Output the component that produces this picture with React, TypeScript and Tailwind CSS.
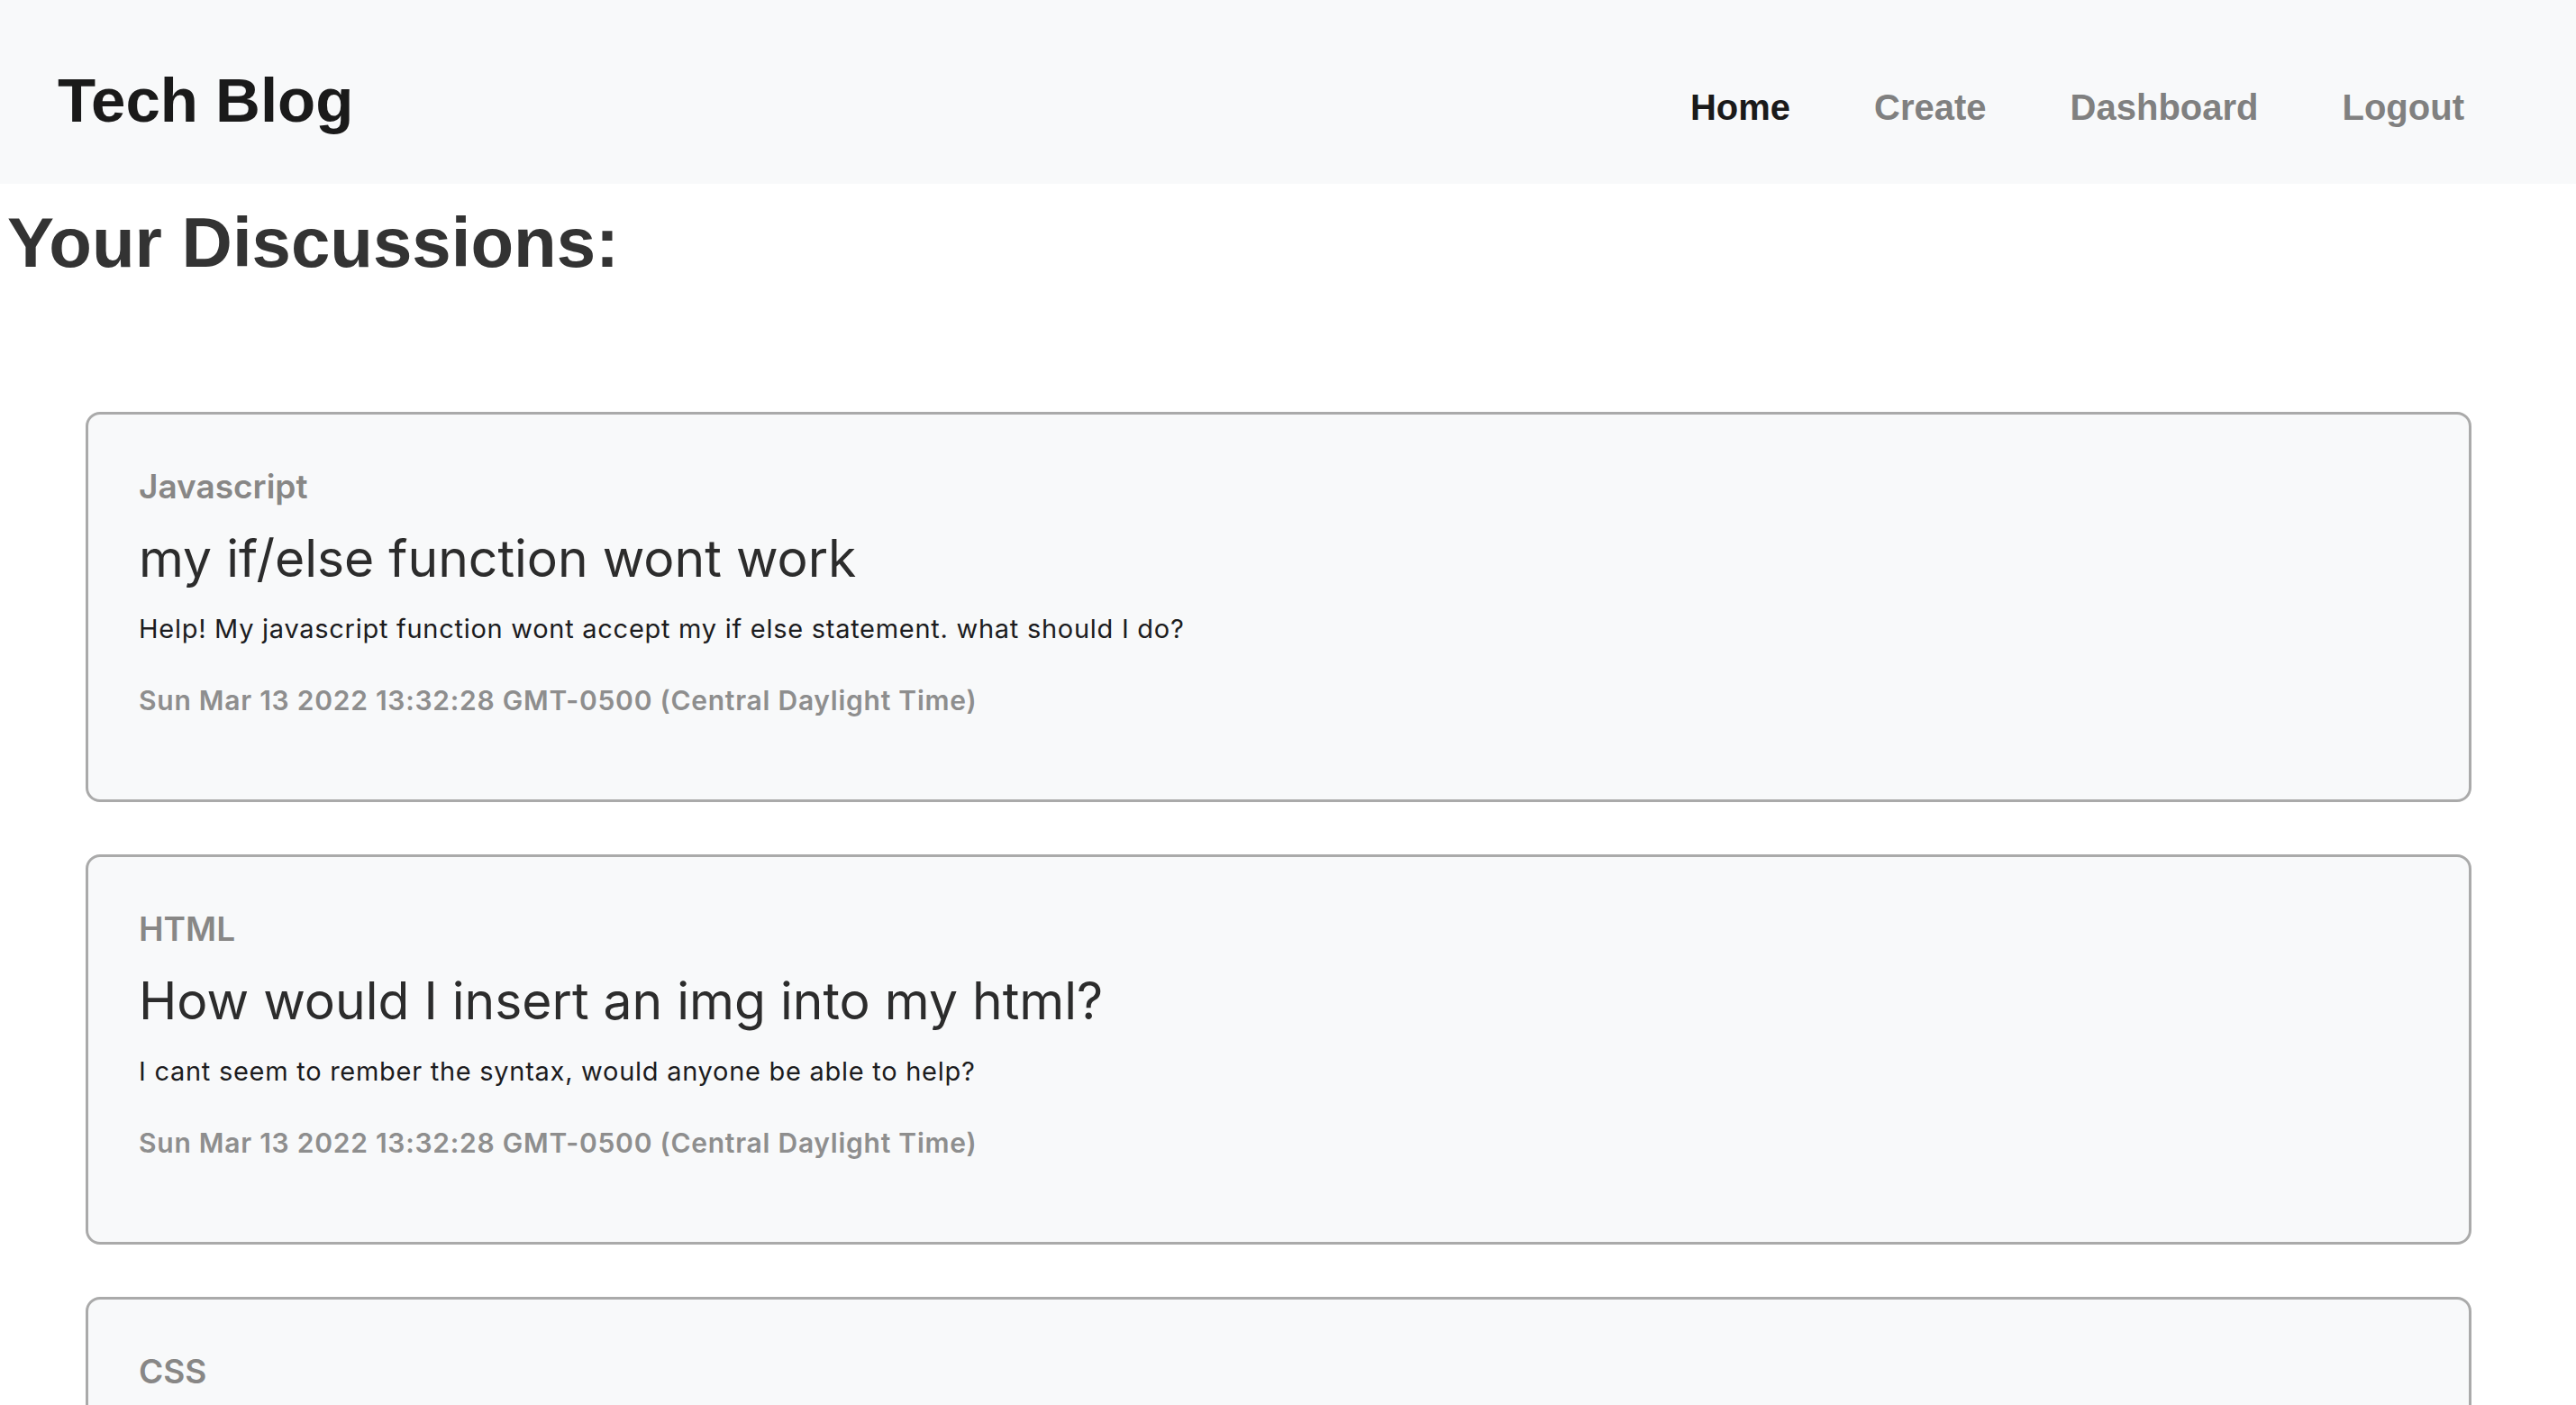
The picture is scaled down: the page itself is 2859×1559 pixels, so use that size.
import React from 'react';

const posts = [
  {
    category: 'Javascript',
    title: 'my if/else function wont work',
    body: 'Help! My javascript function wont accept my if else statement. what should I do?',
    date: 'Sun Mar 13 2022 13:32:28 GMT-0500 (Central Daylight Time)',
  },
  {
    category: 'HTML',
    title: 'How would I insert an img into my html?',
    body: 'I cant seem to rember the syntax, would anyone be able to help?',
    date: 'Sun Mar 13 2022 13:32:28 GMT-0500 (Central Daylight Time)',
  },
  {
    category: 'CSS',
    title: 'How do I center a div?',
    body: 'I have tried everything and my div still sits on the left side of the page.',
    date: 'Sun Mar 13 2022 13:32:28 GMT-0500 (Central Daylight Time)',
  },
];

const navLinks = ['Home', 'Create', 'Dashboard', 'Logout'];

const App = () => {
  return (
    <div className="min-h-screen bg-white pb-[60px]">
      {/* Navbar */}
      <header className="flex items-start justify-between h-[204px] bg-[#f8f9fa] pl-[64px] pr-[124px] font-['Liberation_Sans',Arial,sans-serif]">
        <a className="pt-[77px] text-[69px] leading-none font-bold text-[#1a1a1a]">Tech Blog</a>
        <nav className="flex gap-[93px] pt-[99px]">
          {navLinks.map((link, i) => (
            <a
              key={link}
              className={`text-[40px] leading-none font-bold ${i === 0 ? 'text-[#1a1a1a]' : 'text-[#808080]'}`}
            >
              {link}
            </a>
          ))}
        </nav>
      </header>

      <h1 className="mt-[26px] pl-[8px] text-[78px] leading-none font-bold text-[#333333] font-['Liberation_Sans',Arial,sans-serif]">
        Your Discussions:
      </h1>

      {/* Posts */}
      <div className="mt-[149px] ml-[95px] mr-[116px] flex flex-col gap-[58px] font-['Inter','Noto_Sans',sans-serif]">
        {posts.map((post, index) => (
          <div
            key={index}
            className="border-[3px] border-[#aaaaaa] rounded-[16px] bg-[#f8f9fa] px-[56px] pt-[58px] pb-[89px]"
          >
            <h6 className="text-[37px] leading-[44px] font-semibold text-[#888786]">{post.category}</h6>
            <h5 className="mt-[23px] text-[57px] leading-[70px] font-normal text-[#2c2c2c]">{post.title}</h5>
            <p className="mt-[22px] text-[29px] leading-[42px] tracking-[0.025em] text-[#1c1c1e]">{post.body}</p>
            <p className="mt-[37px] text-[30px] leading-[42px] tracking-[0.025em] font-semibold text-[#8e8e8e]">{post.date}</p>
          </div>
        ))}
      </div>
    </div>
  );
};

export default App;
